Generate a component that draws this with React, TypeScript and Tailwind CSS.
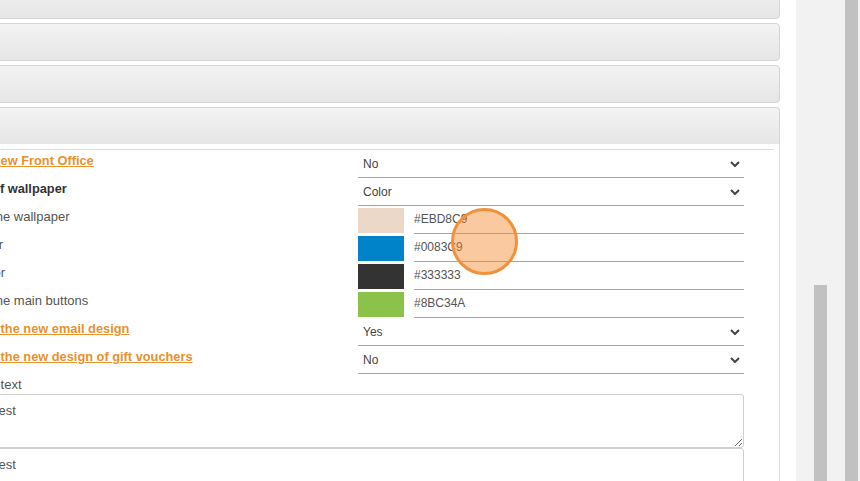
import React from "react";

type Row =
  | { type: "select"; label: string; labelClass: string; value: string }
  | { type: "color"; label: string; value: string; swatchClass: string };

const linkCls = "text-[12.8px] font-bold text-[#e8912d] underline underline-offset-[1px]";
const boldCls = "text-[12.8px] font-bold text-[#333]";

const rows: Row[] = [
  { type: "select", label: "Use the new Front Office", labelClass: linkCls, value: "No" },
  { type: "select", label: "Display of wallpaper", labelClass: boldCls, value: "Color" },
  { type: "color", label: "Color of the wallpaper", value: "#EBD8C9", swatchClass: "bg-[#EBD8C9]" },
  { type: "color", label: "Main color", value: "#0083C9", swatchClass: "bg-[#0083C9]" },
  { type: "color", label: "Links color", value: "#333333", swatchClass: "bg-[#333333]" },
  { type: "color", label: "Color of the main buttons", value: "#8BC34A", swatchClass: "bg-[#8BC34A]" },
  { type: "select", label: "Only use the new email design", labelClass: linkCls, value: "Yes" },
  { type: "select", label: "Only use the new design of gift vouchers", labelClass: linkCls, value: "No" },
];

function Chevron() {
  return (
    <svg width="10" height="6" viewBox="0 0 10 6" className="shrink-0">
      <polyline points="1,1 5,5 9,1" fill="none" stroke="#444" strokeWidth="2" />
    </svg>
  );
}

function Header() {
  return (
    <div className="h-[38px] shrink-0 rounded-[4px] border border-[#d6d6d6] bg-gradient-to-b from-[#f3f3f3] to-[#e6e6e6]" />
  );
}

export default function App() {
  return (
    <div className="w-[860px] h-[481px] overflow-hidden bg-white flex font-['Liberation_Sans',Arial,sans-serif]">
      <div className="w-[796px] shrink-0 overflow-hidden relative">
        <div className="ml-[-80px] w-[860px] mt-[-19px] flex flex-col gap-[4px]">
          <Header />
          <Header />
          <Header />
          <div className="flex flex-col">
            <div className="h-[37px] rounded-t-[4px] border border-b-0 border-[#d6d6d6] bg-gradient-to-b from-[#f3f3f3] to-[#e6e6e6]" />
            <div className="border-x border-[#dcdcdc] px-[5px] pt-[5px] bg-white">
              <div className="border-t border-[#dcdcdc]">
                {rows.map((r, i) => (
                  <div key={i} className="flex h-[28px]">
                    <div className="w-[432px] shrink-0 pl-[17px] leading-[20px] whitespace-nowrap">
                      {r.type === "select" ? (
                        <span className={r.labelClass}>{r.label}</span>
                      ) : (
                        <span className="text-[13px] text-[#555]">{r.label}</span>
                      )}
                    </div>
                    {r.type === "select" ? (
                      <div className="w-[386px] shrink-0 h-[28px] border-b border-[#a5a5a5] flex items-center justify-between pl-[5px] pr-[4px] text-[12px] text-[#444]">
                        <span>{r.value}</span>
                        <Chevron />
                      </div>
                    ) : (
                      <div className="w-[386px] shrink-0 flex">
                        <div className={`w-[46px] h-[25px] mt-[2px] shrink-0 ${r.swatchClass}`} />
                        <div className="ml-[10px] flex-1 h-[28px] border-b border-[#a5a5a5] leading-[27px] text-[12px] text-[#555]">
                          {r.value}
                        </div>
                      </div>
                    )}
                  </div>
                ))}
                <div className="h-[20px] pl-[17px] leading-[21px] text-[13px] text-[#555] whitespace-nowrap">
                  Welcome text
                </div>
                <div className="pl-[59px] pr-[30px] flex flex-col">
                  <textarea
                    readOnly
                    defaultValue="Test"
                    className="block w-full h-[54px] rounded-[3px] border border-[#cfcfcf] px-[6px] pt-[6px] leading-[20px] text-[13px] text-[#555] bg-white outline-none"
                  />
                  <textarea
                    readOnly
                    defaultValue="Test"
                    className="block w-full h-[60px] rounded-[3px] border border-[#cfcfcf] px-[6px] pt-[6px] leading-[20px] text-[13px] text-[#555] bg-white outline-none"
                  />
                </div>
              </div>
            </div>
          </div>
        </div>
        <div className="absolute left-[451px] top-[208px] w-[67px] h-[67px] rounded-full border-[3px] border-[#f0923b] bg-[rgba(247,135,45,0.45)]" />
      </div>
      <div className="flex-1 bg-[#f2f2f2] flex pl-[18px] gap-[18px]">
        <div className="w-[13px] mt-[285px] bg-[#c1c1c1]" />
        <div className="w-[13px] bg-[#c1c1c1]" />
      </div>
    </div>
  );
}
